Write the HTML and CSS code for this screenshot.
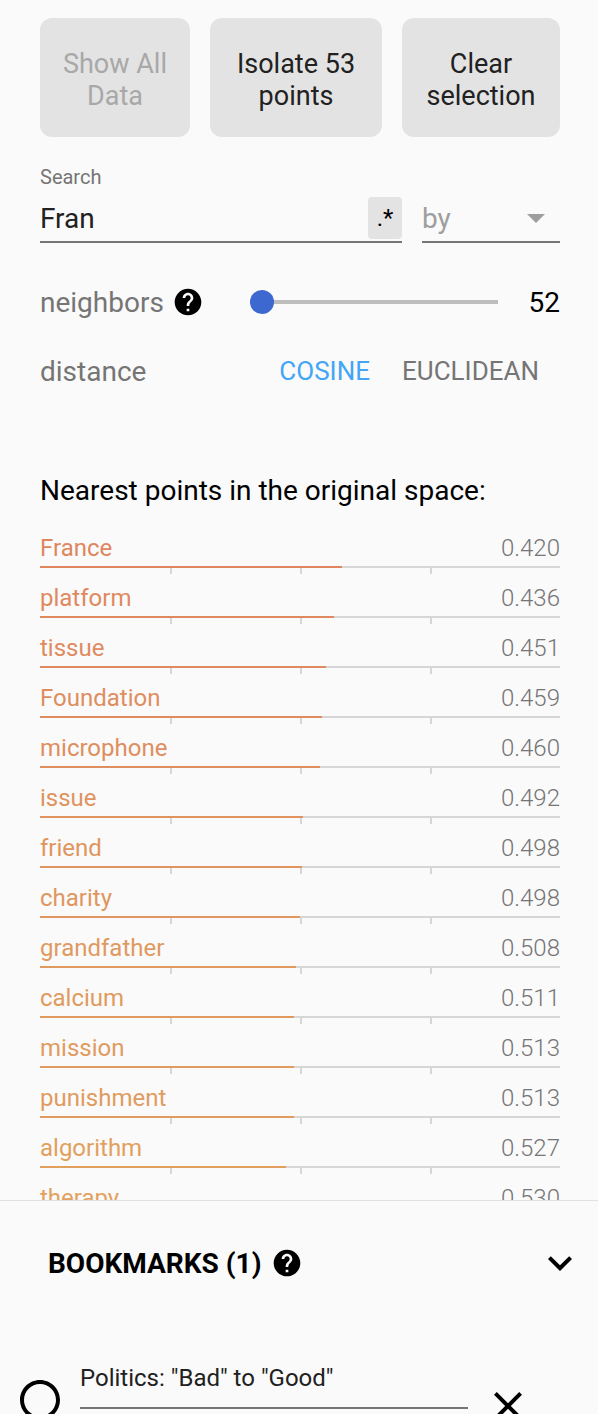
FILE: index.html
```html
<!doctype html>
<html>
<head>
<meta charset="utf-8">
<title>Inspector</title>
<link rel="stylesheet" href="styles.css">
</head>

<body>
	<div class="inspector">
		<div class="buttons">
			<button class="btn btn-showall" disabled>Show All<br>Data</button>
			<button class="btn btn-isolate">Isolate 53<br>points</button>
			<button class="btn btn-clear">Clear<br>selection</button>
		</div>

		<div class="search">
			<div class="search-label">Search</div>
			<div class="search-row">
				<div class="search-field">
					<span class="search-text">Fran</span>
					<span class="regex">.*</span>
				</div>
				<div class="by-field">
					<span class="by-text">by</span>
					<span class="by-arrow"></span>
				</div>
			</div>
		</div>

		<div class="neighbors">
			<div class="neighbors-label">
				<span>neighbors</span>
				<svg class="help" viewBox="0 0 24 24"><path d="M12 2C6.48 2 2 6.48 2 12s4.48 10 10 10 10-4.48 10-10S17.52 2 12 2zm1 17h-2v-2h2v2zm2.070-7.75l-.9.92C13.45 12.9 13 13.5 13 15h-2v-.5c0-1.1.45-2.1 1.17-2.83l1.24-1.26c.37-.36.59-.86.59-1.41 0-1.1-.9-2-2-2s-2 .9-2 2H8c0-2.21 1.79-4 4-4s4 1.79 4 4c0 .88-.36 1.68-.93 2.25z"/></svg>
			</div>
			<div class="slider">
				<div class="slider-track"></div>
				<div class="slider-knob"></div>
			</div>
			<div class="neighbors-value">52</div>
		</div>

		<div class="distance">
			<span class="distance-label">distance</span>
			<div class="distance-options">
				<span class="option selected">COSINE</span>
				<span class="option">EUCLIDEAN</span>
			</div>
		</div>

		<div class="nn-title">Nearest points in the original space:</div>

		<div class="nn-list">
			<div class="nn-row">
				<div class="nn-head"><span class="nn-name" style="color: #df865f;">France</span><span class="nn-value">0.420</span></div>
				<div class="nn-bar"><div class="nn-fill" style="width: 302px; background-color: #df865f;"></div><i></i><i></i><i></i></div>
			</div>
			<div class="nn-row">
				<div class="nn-head"><span class="nn-name" style="color: #df895f;">platform</span><span class="nn-value">0.436</span></div>
				<div class="nn-bar"><div class="nn-fill" style="width: 294px; background-color: #df895f;"></div><i></i><i></i><i></i></div>
			</div>
			<div class="nn-row">
				<div class="nn-head"><span class="nn-name" style="color: #df8b5f;">tissue</span><span class="nn-value">0.451</span></div>
				<div class="nn-bar"><div class="nn-fill" style="width: 286px; background-color: #df8b5f;"></div><i></i><i></i><i></i></div>
			</div>
			<div class="nn-row">
				<div class="nn-head"><span class="nn-name" style="color: #df8d5f;">Foundation</span><span class="nn-value">0.459</span></div>
				<div class="nn-bar"><div class="nn-fill" style="width: 282px; background-color: #df8d5f;"></div><i></i><i></i><i></i></div>
			</div>
			<div class="nn-row">
				<div class="nn-head"><span class="nn-name" style="color: #df8e5f;">microphone</span><span class="nn-value">0.460</span></div>
				<div class="nn-bar"><div class="nn-fill" style="width: 280px; background-color: #df8e5f;"></div><i></i><i></i><i></i></div>
			</div>
			<div class="nn-row">
				<div class="nn-head"><span class="nn-name" style="color: #e0935e;">issue</span><span class="nn-value">0.492</span></div>
				<div class="nn-bar"><div class="nn-fill" style="width: 263px; background-color: #e0935e;"></div><i></i><i></i><i></i></div>
			</div>
			<div class="nn-row">
				<div class="nn-head"><span class="nn-name" style="color: #e0955e;">friend</span><span class="nn-value">0.498</span></div>
				<div class="nn-bar"><div class="nn-fill" style="width: 262px; background-color: #e0955e;"></div><i></i><i></i><i></i></div>
			</div>
			<div class="nn-row">
				<div class="nn-head"><span class="nn-name" style="color: #e0965e;">charity</span><span class="nn-value">0.498</span></div>
				<div class="nn-bar"><div class="nn-fill" style="width: 260px; background-color: #e0965e;"></div><i></i><i></i><i></i></div>
			</div>
			<div class="nn-row">
				<div class="nn-head"><span class="nn-name" style="color: #e0995e;">grandfather</span><span class="nn-value">0.508</span></div>
				<div class="nn-bar"><div class="nn-fill" style="width: 256px; background-color: #e0995e;"></div><i></i><i></i><i></i></div>
			</div>
			<div class="nn-row">
				<div class="nn-head"><span class="nn-name" style="color: #e19a5e;">calcium</span><span class="nn-value">0.511</span></div>
				<div class="nn-bar"><div class="nn-fill" style="width: 254px; background-color: #e19a5e;"></div><i></i><i></i><i></i></div>
			</div>
			<div class="nn-row">
				<div class="nn-head"><span class="nn-name" style="color: #e19b5e;">mission</span><span class="nn-value">0.513</span></div>
				<div class="nn-bar"><div class="nn-fill" style="width: 254px; background-color: #e19b5e;"></div><i></i><i></i><i></i></div>
			</div>
			<div class="nn-row">
				<div class="nn-head"><span class="nn-name" style="color: #e19b5e;">punishment</span><span class="nn-value">0.513</span></div>
				<div class="nn-bar"><div class="nn-fill" style="width: 254px; background-color: #e19b5e;"></div><i></i><i></i><i></i></div>
			</div>
			<div class="nn-row">
				<div class="nn-head"><span class="nn-name" style="color: #e2a05e;">algorithm</span><span class="nn-value">0.527</span></div>
				<div class="nn-bar"><div class="nn-fill" style="width: 246px; background-color: #e2a05e;"></div><i></i><i></i><i></i></div>
			</div>
			<div class="nn-row">
				<div class="nn-head"><span class="nn-name" style="color: #e2a15e;">therapy</span><span class="nn-value">0.530</span></div>
				<div class="nn-bar"><div class="nn-fill" style="width: 244px; background-color: #e2a15e;"></div><i></i><i></i><i></i></div>
			</div>
		</div>
	</div> <!-- end inspector -->

	<div class="bookmarks">
		<div class="bm-header">
			<span class="bm-title">BOOKMARKS (1)</span>
			<svg class="help" viewBox="0 0 24 24"><path d="M12 2C6.48 2 2 6.48 2 12s4.48 10 10 10 10-4.48 10-10S17.52 2 12 2zm1 17h-2v-2h2v2zm2.07-7.75l-.9.92C13.45 12.9 13 13.5 13 15h-2v-.5c0-1.1.45-2.1 1.17-2.83l1.24-1.26c.37-.36.59-.86.59-1.41 0-1.1-.9-2-2-2s-2 .9-2 2H8c0-2.21 1.79-4 4-4s4 1.79 4 4c0 .88-.36 1.68-.93 2.25z"/></svg>
			<svg class="chevron" viewBox="0 0 24 24"><path d="M16.59 8.59L12 13.17 7.41 8.59 6 10l6 6 6-6z"/></svg>
		</div>
		<div class="bm-item">
			<svg class="bm-radio" viewBox="0 0 24 24"><path d="M12 2C6.48 2 2 6.48 2 12s4.48 10 10 10 10-4.48 10-10S17.52 2 12 2zm0 18c-4.42 0-8-3.58-8-8s3.58-8 8-8 8 3.58 8 8-3.58 8-8 8z"/></svg>
			<div class="bm-name">Politics: "Bad" to "Good"</div>
			<svg class="bm-close" viewBox="0 0 24 24"><path d="M19 6.41L17.59 5 12 10.59 6.41 5 5 6.41 10.59 12 5 17.59 6.41 19 12 13.41 17.59 19 19 17.59 13.41 12z"/></svg>
		</div>
	</div>
</body>
</html>
```

FILE: styles.css
```css
/* 전체 */
html, body {margin: 0; background-color: #fafafa;}
body {font-family: Roboto, 'Liberation Sans', sans-serif; color: #212121; width: 598px; height: 1414px; overflow: hidden;}

.inspector {height: 1200px; overflow: hidden; padding: 18px 38px 0 40px; box-sizing: border-box;}

/* 상단 버튼 */
.buttons {display: flex; gap: 20px; height: 119px;}
.btn {height: 119px; border: none; border-radius: 12px; background-color: #e3e3e3; font-family: Roboto, 'Liberation Sans', sans-serif; font-size: 27px; line-height: 32px; color: #212121; padding: 4px 0 0 0; text-align: center;}
.btn-showall {width: 150px; color: #a8a8a8;}
.btn-isolate {width: 172px;}
.btn-clear {width: 158px;}

/* 검색 */
.search {margin-top: 30px;}
.search-label {font-size: 20px; line-height: 20px; color: #757575;}
.search-row {display: flex; gap: 20px;}
.search-field {width: 362px; height: 46px; padding-top: 8px; border-bottom: 2px solid #757575; display: flex; align-items: center; justify-content: space-between;}
.search-text {font-size: 28px; color: #212121;}
.regex {width: 34px; height: 42px; border-radius: 4px; background-color: #e3e3e3; font-size: 24px; line-height: 42px; text-align: center; color: #000000;}
.by-field {width: 138px; height: 46px; padding-top: 8px; border-bottom: 2px solid #757575; display: flex; align-items: center; justify-content: space-between;}
.by-text {font-size: 28px; color: #9e9e9e;}
.by-arrow {width: 0; height: 0; border-left: 9px solid transparent; border-right: 9px solid transparent; border-top: 9px solid #9e9e9e; margin-right: 15px;}

/* 이웃 수 */
.neighbors {display: flex; align-items: center; height: 60px; margin-top: 29px;}
.neighbors-label {width: 210px; display: flex; align-items: center; gap: 8px; font-size: 28px; color: #757575;}
.help {width: 32px; height: 32px; fill: #000000;}
.slider {position: relative; width: 248px; height: 24px;}
.slider-track {margin-top: 10px; height: 4px; background-color: #bdbdbd;}
.slider-knob {position: absolute; left: 0; top: 0; width: 24px; height: 24px; border-radius: 50%; background-color: #3c68d0;}
.neighbors-value {flex: 1; text-align: right; font-size: 28px; color: #000000;}

/* 거리 */
.distance {display: flex; align-items: center; height: 60px; margin-top: 9px;}
.distance-label {font-size: 28px; color: #757575;}
.distance-options {margin-left: auto; margin-right: 21px; display: flex; gap: 32px;}
.option {font-size: 26px; color: #757575;}
.option.selected {color: #42a5f5;}

/* 최근접 목록 */
.nn-title {margin-top: 72px; font-size: 28px; line-height: 36px; color: #000000;}
.nn-list {margin-top: 16px;}
.nn-row {height: 50px; padding-top: 8px; box-sizing: border-box;}
.nn-head {display: flex; justify-content: space-between; height: 30px; line-height: 30px; font-size: 24px;}
.nn-value {color: #757575; font-weight: 300;}
.nn-bar {position: relative; margin-top: 3px; height: 2px; background-color: #d6d6d6;}
.nn-fill {height: 2px;}
.nn-bar>i {position: absolute; top: 2px; width: 2px; height: 6px; background-color: #d6d6d6;}
.nn-bar>i:nth-of-type(1) {left: 130px;}
.nn-bar>i:nth-of-type(2) {left: 260px;}
.nn-bar>i:nth-of-type(3) {left: 390px;}

/* 북마크 */
.bookmarks {border-top: 1px solid #e0e0e0;}
.bm-header {height: 124px; display: flex; align-items: center; padding: 0 14px 0 48px;}
.bm-title {font-size: 28px; font-weight: 700; color: #000000; margin-right: 10px;}
.chevron {width: 48px; height: 48px; margin-left: auto; fill: #000000;}
.bm-item {display: flex; align-items: flex-start;}
.bm-radio {width: 48px; height: 48px; margin: 51px 0 0 16px; fill: #000000;}
.bm-name {width: 388px; margin: 39px 0 0 16px; padding-bottom: 15px; border-bottom: 2px solid #757575; font-size: 24px; line-height: 28px; color: #212121;}
.bm-close {width: 48px; height: 48px; margin: 57px 0 0 16px; fill: #000000;}
```
